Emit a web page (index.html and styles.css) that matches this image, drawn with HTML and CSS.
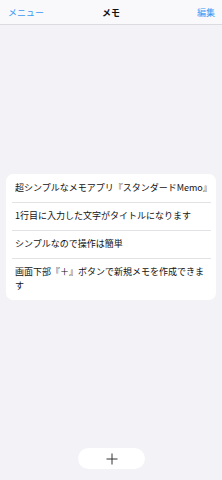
FILE: index.html
```html
<!DOCTYPE html>
<html lang="ja">
<head>
    <meta charset="UTF-8">
    <meta name="viewport" content="width=device-width, initial-scale=1.0">
    <title>メモ</title>
    <link rel="stylesheet" href="styles.css">
</head>
<body>

<div class="app">
    <div class="nav-bar">
        <span class="nav-button">メニュー</span>
        <span class="nav-title">メモ</span>
        <span class="nav-button">編集</span>
    </div>

    <div class="content">
        <ul class="memo-list">
            <li class="memo-row">超シンプルなメモアプリ『スタンダードMemo』</li>
            <li class="memo-row">1行目に入力した文字がタイトルになります</li>
            <li class="memo-row">シンプルなので操作は簡単</li>
            <li class="memo-row">画面下部『＋』ボタンで新規メモを作成できます</li>
        </ul>
    </div>

    <div class="toolbar">
        <button class="add-button">
            <svg width="12" height="12" viewBox="0 0 12 12">
                <path d="M6 0.5V11.5M0.5 6H11.5" stroke="#333" stroke-width="1" fill="none"/>
            </svg>
        </button>
    </div>
</div>

</body>
</html>
```

FILE: styles.css
```css
body {
    margin: 0;
    padding: 0;
    background-color: #f2f2f7;
    font-family: "Noto Sans CJK JP", "Noto Sans", sans-serif;
    color: #111;
}

.app {
    display: flex;
    flex-direction: column;
    height: 100vh;
}

.nav-bar {
    height: 24px;
    display: flex;
    align-items: center;
    justify-content: space-between;
    padding: 0 7px 0 8px;
    background-color: #f9f9fb;
    border-bottom: 1px solid #dcdce0;
    position: relative;
}

.nav-button {
    font-size: 9px;
    color: #3b99f5;
}

.nav-title {
    position: absolute;
    left: 0;
    right: 0;
    text-align: center;
    font-size: 9px;
    font-weight: bold;
    pointer-events: none;
}

.content {
    flex: 1;
    display: flex;
    align-items: center;
    padding: 0 6px;
}

.memo-list {
    list-style: none;
    margin: 0;
    padding: 0;
    width: 100%;
    background-color: #fff;
    border-radius: 7px;
}

.memo-row {
    font-size: 9px;
    line-height: 14px;
    padding: 7px 8px 7px 9px;
    position: relative;
}

.memo-row + .memo-row::before {
    content: "";
    position: absolute;
    top: 0;
    left: 6px;
    right: 5px;
    border-top: 1px solid #e2e2e6;
}

.toolbar {
    display: flex;
    justify-content: center;
    padding-bottom: 11px;
}

.add-button {
    width: 67px;
    height: 21px;
    border: none;
    border-radius: 11px;
    background-color: #fff;
    display: flex;
    align-items: center;
    justify-content: center;
    padding: 0;
    margin-left: 1px;
}
```
